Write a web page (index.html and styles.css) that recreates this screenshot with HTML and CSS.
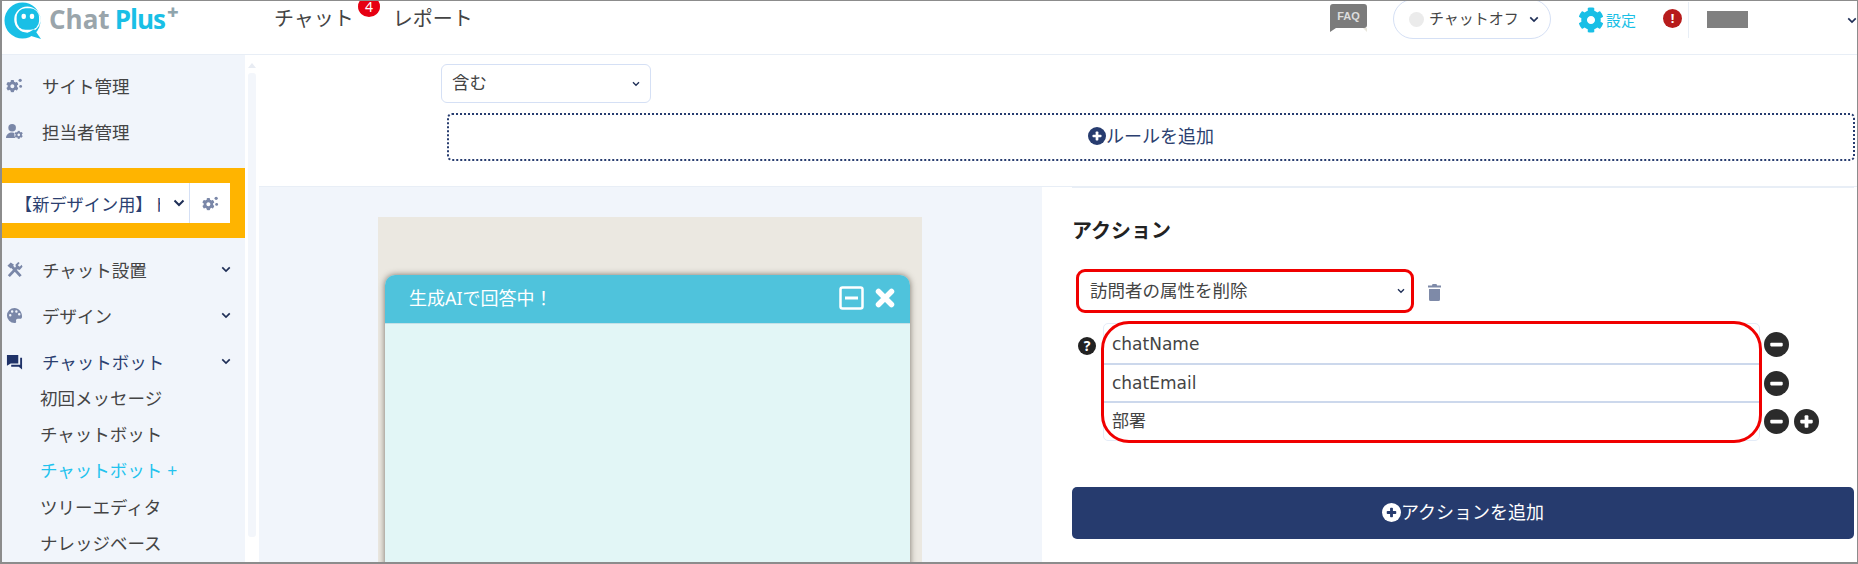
FILE: index.html
```html
<!DOCTYPE html>
<html lang="ja">
<head>
    <meta charset="UTF-8">
    <title>Chat Plus</title>
    <link rel="stylesheet" href="styles.css">
</head>
<body>
    <svg class="sprites" width="0" height="0">
        <symbol id="gear" viewBox="0 0 512 512"><path d="M487.4 315.7l-42.6-24.6c4.3-23.2 4.3-47 0-70.2l42.6-24.6c4.9-2.8 7.1-8.6 5.5-14-11.1-35.6-30-67.8-54.7-94.6-3.8-4.1-10-5.1-14.8-2.3L380.8 110c-17.9-15.4-38.5-27.3-60.8-35.1V25.8c0-5.6-3.9-10.5-9.4-11.7-36.7-8.2-74.3-7.8-109.2 0-5.5 1.2-9.4 6.1-9.4 11.7V75c-22.2 7.9-42.8 19.8-60.8 35.1L88.7 85.5c-4.9-2.8-11-1.9-14.8 2.3-24.7 26.7-43.6 58.9-54.7 94.6-1.7 5.4.6 11.2 5.5 14L67.3 221c-4.3 23.2-4.3 47 0 70.2l-42.6 24.6c-4.9 2.8-7.1 8.6-5.5 14 11.1 35.6 30 67.8 54.7 94.6 3.8 4.1 10 5.1 14.8 2.3l42.6-24.6c17.9 15.4 38.5 27.3 60.8 35.1v49.2c0 5.6 3.9 10.5 9.4 11.7 36.7 8.2 74.3 7.8 109.2 0 5.5-1.2 9.4-6.1 9.4-11.7v-49.2c22.2-7.9 42.8-19.8 60.8-35.1l42.6 24.6c4.9 2.8 11 1.9 14.8-2.3 24.7-26.7 43.6-58.9 54.7-94.6 1.5-5.5-.7-11.3-5.6-14.1zM256 336c-44.1 0-80-35.9-80-80s35.9-80 80-80 80 35.9 80 80-35.9 80-80 80z"/></symbol>
        <symbol id="cogs" viewBox="0 0 18 18"><use href="#gear" x="0" y="3" width="13.500" height="13.500"/><circle cx="15" cy="3.500" r="1.700"/><circle cx="15.500" cy="10" r="1.500"/></symbol>
        <symbol id="chev" viewBox="0 0 12 8"><path d="M1.500 1.500 6 6l4.500-4.500" fill="none" stroke="currentColor" stroke-width="2"/></symbol>
        <symbol id="minus" viewBox="0 0 24 24"><circle cx="12" cy="12" r="12"/><rect x="6" y="10.200" width="12" height="3.600" rx="1" fill="var(--cross, #fff)"/></symbol>
        <symbol id="plus" viewBox="0 0 24 24"><circle cx="12" cy="12" r="12"/><rect x="6" y="10.200" width="12" height="3.600" rx="1" fill="var(--cross, #fff)"/><rect x="10.200" y="6" width="3.600" height="12" rx="1" fill="var(--cross, #fff)"/></symbol>
    </svg>

    <div class="frame">
        <header class="topbar">
            <div class="logo">
                <svg class="logo-mark" viewBox="0 0 38 38">
                    <path fill-rule="evenodd" d="M19 .5a18.500 18.500 0 1 0 0 37a18.500 18.500 0 1 0 0-37zM24 4.500a13.500 13.500 0 1 1 0 27a13.500 13.500 0 1 1 0-27z" fill="#19bfe6"/>
                    <rect x="13" y="6.500" width="23" height="22" rx="9" fill="#19bfe6"/>
                    <path d="M22 33l9-5 7 10z" fill="#19bfe6"/>
                    <rect x="18" y="12" width="4.500" height="5.500" rx="2" fill="#fff"/>
                    <rect x="26.500" y="12" width="4.500" height="5.500" rx="2" fill="#fff"/>
                </svg>
                <span class="logo-chat">Chat</span>
                <span class="logo-plus">Plus</span>
                <sup class="logo-sup">+</sup>
            </div>
            <nav class="topnav">
                <a class="topnav-item">チャット<span class="badge">4</span></a>
                <a class="topnav-item">レポート</a>
            </nav>
            <div class="topright">
                <svg class="faq" viewBox="0 0 37 28">
                    <path d="M33 24l4 4v-4z" fill="#e8e6dc"/>
                    <path d="M3 0h31a3 3 0 0 1 3 3v18a3 3 0 0 1-3 3H6l-6 4V3a3 3 0 0 1 3-3z" fill="#7b7b7b"/>
                    <text x="18.500" y="16" text-anchor="middle" class="faq-text">FAQ</text>
                </svg>
                <div class="chat-toggle">
                    <span class="dot"></span>チャットオフ
                    <svg class="chev chev-sm"><use href="#chev"/></svg>
                </div>
                <a class="settings"><svg class="settings-icon"><use href="#gear"/></svg>設定</a>
                <span class="alert">!</span>
                <div class="user">
                    <span class="user-name"></span>
                    <svg class="chev chev-sm"><use href="#chev"/></svg>
                </div>
            </div>
        </header>

        <div class="body">
            <aside class="sidebar">
                <div class="side-menu">
                    <a class="side-item first">
                        <svg class="side-icon"><use href="#cogs"/></svg>サイト管理
                    </a>
                    <a class="side-item">
                        <svg class="side-icon" viewBox="0 0 18 18"><circle cx="6.500" cy="5" r="4"/><path d="M0 16c0-4 3-6 6.500-6 1 0 2 .2 2.500.5-.5 2 0 4 1 5.500z"/><use href="#gear" x="9" y="8" width="9" height="9"/></svg>担当者管理
                    </a>
                    <div class="site-bar">
                        <div class="site-select">
                            <span class="site-name">【新デザイン用】ト</span>
                            <svg class="chev"><use href="#chev"/></svg>
                        </div>
                        <div class="site-gear"><svg class="side-icon"><use href="#cogs"/></svg></div>
                    </div>
                    <a class="side-item has-sub">
                        <svg class="side-icon" viewBox="0 0 18 18"><path d="M3 16 11.500 7M15.500 16 5.500 5" fill="none" stroke="#7a87a8" stroke-width="3"/><path d="M1.500 5 5 1.500 8.500 4 5 8zM10 4l3-3 1.500 1-2 2.500 2 1.500 2-2 1 2-3 3.500-3.500-1z"/></svg>チャット設置
                        <svg class="chev chev-sm"><use href="#chev"/></svg>
                    </a>
                    <a class="side-item has-sub">
                        <svg class="side-icon" viewBox="0 0 18 18"><path fill-rule="evenodd" d="M9 1a8 8 0 0 0 0 16c1.500 0 2-1 1.700-2-.4-1.300.4-2.500 1.800-2.500H15c1.200 0 2-1 2-2.500 0-5-3.600-9-8-9zM4.500 10a1.300 1.300 0 1 1 0-2.600 1.300 1.300 0 0 1 0 2.600zM6.500 6a1.300 1.300 0 1 1 0-2.600 1.300 1.300 0 0 1 0 2.600zM11 6a1.300 1.300 0 1 1 0-2.600 1.300 1.300 0 0 1 0 2.600zM14 9a1.300 1.300 0 1 1 0-2.600 1.300 1.300 0 0 1 0 2.600z"/></svg>デザイン
                        <svg class="chev chev-sm"><use href="#chev"/></svg>
                    </a>
                    <a class="side-item has-sub current">
                        <svg class="side-icon" viewBox="0 0 18 18"><path d="M1 2h12v9H5l-4 2.500z"/><path d="M15 5h2v12.500l-3.500-3H5.500V12.500H15z"/></svg>チャットボット
                        <svg class="chev chev-sm"><use href="#chev"/></svg>
                    </a>
                    <ul class="sub-menu">
                        <li>初回メッセージ</li>
                        <li>チャットボット</li>
                        <li class="active">チャットボット<span class="sub-plus">+</span></li>
                        <li>ツリーエディタ</li>
                        <li>ナレッジベース</li>
                    </ul>
                </div>
                <div class="side-scroll"><span class="scroll-thumb"></span></div>
            </aside>

            <main class="content">
                <section class="rule-panel">
                    <div class="select rule-select"><span class="select-text">含む</span><svg class="chev chev-xs"><use href="#chev"/></svg></div>
                    <button class="add-rule"><svg class="add-icon"><use href="#plus"/></svg><span class="select-text">ルールを追加</span></button>
                </section>

                <div class="lower">
                    <section class="preview-pane">
                        <div class="preview">
                            <div class="widget">
                                <div class="widget-head">
                                    <span class="widget-title">生成AIで回答中！</span>
                                    <svg class="widget-min" viewBox="0 0 25 24"><rect x="1.500" y="1.500" width="22" height="21" rx="2" fill="none" stroke="#fff" stroke-width="2.500"/><rect x="6" y="10.500" width="13" height="3" fill="#fff"/></svg>
                                    <svg class="widget-close" viewBox="0 0 20 20"><path d="M3.500 3.500l13 13M16.500 3.500l-13 13" stroke="#fff" stroke-width="5.500" stroke-linecap="round"/></svg>
                                </div>
                                <div class="widget-body"></div>
                            </div>
                        </div>
                    </section>

                    <section class="action-pane">
                        <h2 class="action-title">アクション</h2>
                        <div class="action-row">
                            <div class="select action-select"><span class="select-text">訪問者の属性を削除</span><svg class="chev chev-xs"><use href="#chev"/></svg></div>
                            <svg class="trash" viewBox="0 0 13 17"><path d="M4.500 0h4l.5 1.500h4V3.500H0V1.500h4zM1 5h11v10.500a1.500 1.500 0 0 1-1.500 1.500h-8A1.500 1.500 0 0 1 1 15.500z"/></svg>
                        </div>
                        <div class="attr-row">
                            <span class="help">?</span>
                            <div class="attr-list">
                                <div class="attr">chatName</div>
                                <div class="attr">chatEmail</div>
                                <div class="attr">部署</div>
                            </div>
                            <div class="attr-btns">
                                <div class="btn-line"><svg class="round-btn"><use href="#minus"/></svg></div>
                                <div class="btn-line"><svg class="round-btn"><use href="#minus"/></svg></div>
                                <div class="btn-line"><svg class="round-btn"><use href="#minus"/></svg><svg class="round-btn"><use href="#plus"/></svg></div>
                            </div>
                        </div>
                        <button class="add-action"><svg class="add-icon"><use href="#plus"/></svg><span class="select-text">アクションを追加</span></button>
                    </section>
                </div>
            </main>
        </div>
    </div>
</body>
</html>
```

FILE: styles.css
```css
* {
    margin: 0;
    padding: 0;
    box-sizing: border-box;
}

body {
    width: 1858px;
    height: 564px;
    overflow: hidden;
    font-family: "Noto Sans", "Noto Sans CJK JP", sans-serif;
    color: #444;
    background-color: white;
}

.sprites {
    position: absolute;
}

.frame {
    width: 1858px;
    height: 564px;
    border: 2px solid #8c8c8c;
    border-top-width: 1px;
    border-right-width: 1px;
    display: flex;
    flex-direction: column;
    overflow: hidden;
}

/* top bar */
.topbar {
    height: 54px;
    flex: none;
    display: flex;
    background-color: white;
    border-bottom: 1px solid #e8eef6;
}

.logo {
    width: 272px;
    flex: none;
    display: flex;
    align-items: flex-start;
    padding: 1px 0 0 2px;
    font-family: "Open Sans", sans-serif;
    font-weight: 700;
    font-size: 26px;
    line-height: 34px;
}

.logo-mark {
    width: 37px;
    height: 37px;
    margin-right: 8px;
}

.logo-chat {
    color: #9aa5ab;
    margin-right: 3px;
}

.logo-plus {
    color: #19bfe6;
    margin-left: 2px;
    letter-spacing: -1px;
}

.logo-sup {
    color: #8fa5ad;
    font-size: 20px;
    font-weight: 800;
    line-height: 16px;
    margin: 2px 0 0 2px;
}

.topnav {
    display: flex;
    gap: 39px;
    margin-top: 2px;
    font-size: 20px;
    line-height: 32px;
}

.topnav-item {
    position: relative;
}

.badge {
    position: absolute;
    left: 84px;
    top: -7px;
    width: 22px;
    height: 21px;
    border-radius: 50%;
    background-color: #e60012;
    color: white;
    font-size: 14px;
    line-height: 21px;
    text-align: center;
}

.topright {
    margin-left: auto;
    display: flex;
    align-items: flex-start;
}

.faq {
    width: 37px;
    height: 28px;
    margin-top: 3px;
    margin-right: 26px;
}

.faq-text {
    font-family: "Liberation Sans", sans-serif;
    font-size: 11px;
    font-weight: 700;
    fill: #ddd;
}

.chat-toggle {
    width: 158px;
    height: 40px;
    margin-top: -2px;
    border: 1px solid #d5e0f5;
    border-radius: 20px;
    display: flex;
    align-items: center;
    padding: 0 0 4px 15px;
    font-size: 15px;
}

.dot {
    width: 15px;
    height: 15px;
    margin: 4px 5px 0 0;
    border-radius: 50%;
    background-color: #ebebeb;
}

.chat-toggle .chev {
    margin: 4px 0 0 10px;
}

.settings {
    display: flex;
    align-items: center;
    margin: 6px 0 0 27px;
    color: #19bfe6;
    font-size: 15px;
    line-height: 22px;
}

.settings-icon {
    width: 26px;
    height: 26px;
    margin-right: 2px;
    fill: #19bfe6;
}

.alert {
    width: 19px;
    height: 19px;
    margin: 8px 6px 0 27px;
    border-radius: 50%;
    background-color: #b71c1c;
    color: white;
    font-size: 13px;
    font-weight: 700;
    line-height: 19px;
    text-align: center;
}

.user {
    width: 169px;
    height: 36px;
    margin-top: 1px;
    border-left: 1px solid #e8eef6;
    display: flex;
    align-items: center;
    padding-left: 18px;
}

.user-name {
    width: 41px;
    height: 17px;
    margin-top: -2px;
    background-color: #808080;
}

.user .chev {
    margin-left: auto;
    margin-right: 0;
}

.chev {
    width: 12px;
    height: 8px;
    flex: none;
    color: #1f2f57;
}

.chev-sm {
    width: 10px;
    height: 7px;
}

.chev-xs {
    width: 8px;
    height: 6px;
    margin-left: auto;
}

/* layout below the top bar */
.body {
    flex: 1;
    display: flex;
    min-height: 0;
}

.sidebar {
    width: 257px;
    flex: none;
    display: flex;
    border-right: 1px solid #e8eef6;
}

.side-menu {
    width: 243px;
    flex: none;
    background-color: #f1f5fb;
    overflow: hidden;
}

.side-item {
    height: 46px;
    display: flex;
    align-items: center;
    font-size: 17.500px;
}

.side-item.first {
    margin-top: 7px;
}

.side-icon {
    width: 17px;
    height: 17px;
    margin: 0 19px 0 4px;
    flex: none;
    fill: #7a87a8;
}

.side-item .chev {
    margin-left: auto;
    margin-right: 14px;
}

.side-item.current {
    color: #2b3f70;
}

.side-item.current .side-icon {
    fill: #1f3268;
}

.site-bar {
    height: 70px;
    margin: 14px 0 8px;
    background-color: #ffb400;
    display: flex;
    align-items: center;
}

.site-select {
    width: 188px;
    height: 40px;
    background-color: white;
    display: flex;
    align-items: center;
    padding-left: 13px;
    color: #2b3f70;
    font-size: 17.200px;
    border-right: 1px solid #d5e0f5;
}

.site-name {
    width: 145px;
    overflow: hidden;
    white-space: nowrap;
}

.site-select .chev {
    margin-left: 13px;
}

.site-gear {
    width: 40px;
    height: 40px;
    background-color: white;
    display: flex;
    align-items: center;
    justify-content: center;
}

.site-gear .side-icon {
    margin: 0;
}

.sub-menu {
    list-style: none;
    margin-top: -4px;
    padding-left: 38px;
    font-size: 17.500px;
    line-height: 36.200px;
}

.sub-menu .active {
    color: #22c3ee;
}

.sub-plus {
    margin-left: 5px;
}

.side-scroll {
    flex: 1;
    background-color: white;
    padding: 8px 3px 0;
}

.side-scroll::before {
    content: "";
    display: block;
    width: 0;
    margin: 0 auto 5px;
    border-left: 4px solid transparent;
    border-right: 4px solid transparent;
    border-bottom: 5px solid #e8ecf3;
}

.scroll-thumb {
    display: block;
    height: 464px;
    border-radius: 3px;
    background-color: #f3f6fb;
}

/* main area */
.content {
    flex: 1;
    min-width: 0;
    display: flex;
    flex-direction: column;
}

.rule-panel {
    height: 132px;
    flex: none;
    padding: 9px 3px 0 182px;
    border-bottom: 1px solid #e8eef6;
}

.select {
    display: flex;
    align-items: center;
    background-color: white;
    font-size: 17.500px;
}

/* Noto CJK sits low in its line box */
.select-text {
    margin-top: -4px;
}

.rule-select {
    width: 210px;
    height: 39px;
    border: 1px solid #d5e0f5;
    border-radius: 6px;
    padding: 0 10px;
}

.add-rule {
    width: 1408px;
    height: 48px;
    margin: 10px 0 0 6px;
    display: flex;
    align-items: center;
    justify-content: center;
    border: 2px dotted #273c6f;
    border-radius: 5px;
    background-color: white;
    color: #2b3f70;
    font-family: inherit;
    font-size: 18px;
}

.add-icon {
    width: 18px;
    height: 18px;
    flex: none;
    margin-top: -2px;
    fill: #273c6f;
}

.lower {
    flex: 1;
    display: flex;
    min-height: 0;
}

.preview-pane {
    width: 783px;
    flex: none;
    background-color: #f1f5fb;
    padding: 30px 0 0 119px;
}

.preview {
    width: 544px;
    height: 345px;
    background-color: #ebe8e1;
    padding: 58px 0 0 7px;
    overflow: hidden;
}

.widget {
    width: 525px;
    height: 340px;
    border-radius: 10px 10px 0 0;
    box-shadow: 0 0 6px rgba(60, 50, 40, 0.65);
    overflow: hidden;
}

.widget-head {
    height: 49px;
    display: flex;
    align-items: center;
    padding: 0 15px 0 24px;
    background-color: #4fc3dc;
    border-bottom: 1px solid #c5e0e6;
    color: white;
    font-size: 18px;
}

.widget-title {
    margin: -4px auto 0 0;
}

.widget-min {
    width: 25px;
    height: 24px;
    margin: 0 11px 2px 0;
}

.widget-close {
    width: 20px;
    height: 20px;
    margin-bottom: 2px;
}

.widget-body {
    height: 100%;
    background-color: #e2f6f6;
}

.action-pane {
    flex: 1;
    min-width: 0;
    padding: 0 3px 0 30px;
}

.action-title {
    height: 82px;
    padding-top: 28px;
    border-top: 1px solid #e8eef6;
    color: #222;
    font-size: 20px;
    font-weight: 700;
    line-height: 29px;
}

.action-row {
    display: flex;
    align-items: center;
    height: 44px;
    margin-left: 4px;
}

.action-select {
    width: 338px;
    height: 44px;
    border: 3px solid #f00000;
    border-radius: 9px;
    padding: 0 6px 0 11px;
}

.trash {
    width: 13px;
    height: 17px;
    margin: 3px 0 0 14px;
    fill: #7e8aa8;
}

.attr-row {
    display: flex;
    margin: 10px 0 0 6px;
}

.help {
    width: 18px;
    height: 18px;
    margin: 14px 7px 0 0;
    border-radius: 50%;
    background-color: #222;
    color: white;
    font-size: 14px;
    font-weight: 700;
    line-height: 18px;
    text-align: center;
}

.attr-list {
    width: 657px;
    height: 118px;
    padding-top: 2px;
    position: relative;
    border: 1px solid #e4ecf8;
    border-radius: 5px;
    font-family: "DejaVu Sans", "Noto Sans CJK JP", sans-serif;
}

/* red marker drawn over the list */
.attr-list::after {
    content: "";
    position: absolute;
    inset: -3px;
    border: 3px solid #f00000;
    border-radius: 28px;
}

.attr {
    height: 38.700px;
    padding: 0 8px;
    font-size: 17px;
    line-height: 36px;
    border-bottom: 2px solid #ccd8ec;
}

.attr:last-child {
    border-bottom: none;
}

.attr-btns {
    margin-left: 4px;
    padding-top: 2px;
}

.btn-line {
    height: 38.700px;
    display: flex;
    align-items: center;
    gap: 5px;
}

.round-btn {
    width: 25px;
    height: 25px;
    fill: #2b2b2b;
}

.add-action {
    width: 782px;
    height: 52px;
    margin-top: 46px;
    display: flex;
    align-items: center;
    justify-content: center;
    border: none;
    border-radius: 5px;
    background-color: #263b6e;
    color: white;
    font-family: inherit;
    font-size: 18px;
}

.add-action .add-icon {
    --cross: #263b6e;
    width: 19px;
    height: 19px;
    fill: white;
}
```
